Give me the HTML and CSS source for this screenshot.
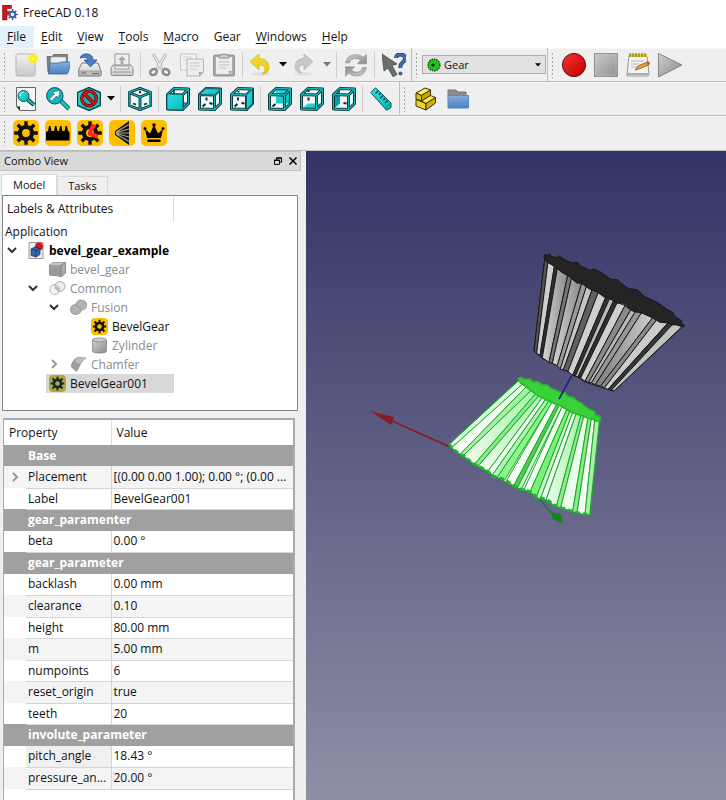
FILE: index.html
```html
<!DOCTYPE html>
<html lang="en">
<head>
<meta charset="utf-8">
<title>FreeCAD 0.18</title>
<link rel="stylesheet" href="styles.css">
</head>
<body>
<svg class="sprite" aria-hidden="true">
  <defs>
    <linearGradient id="grey" x1="0" y1="0" x2="1" y2="1"><stop offset="0" stop-color="#cfcfcf"/><stop offset="1" stop-color="#8c8c8c"/></linearGradient>
    <linearGradient id="pale" x1="0" y1="0" x2="0" y2="1"><stop offset="0" stop-color="#f2f2f2"/><stop offset="1" stop-color="#c9c9c9"/></linearGradient>
    <linearGradient id="blue" x1="0" y1="0" x2="0" y2="1"><stop offset="0" stop-color="#87aede"/><stop offset="1" stop-color="#4a7fc4"/></linearGradient>
    <linearGradient id="yellow" x1="0" y1="0" x2="0" y2="1"><stop offset="0" stop-color="#f6e04a"/><stop offset="1" stop-color="#e8c400"/></linearGradient>
    <linearGradient id="red" x1="0" y1="0" x2="1" y2="1"><stop offset="0" stop-color="#f03434"/><stop offset="1" stop-color="#c40000"/></linearGradient>
    <linearGradient id="cyan" x1="0" y1="0" x2="1" y2="1"><stop offset="0" stop-color="#34e0e2"/><stop offset="1" stop-color="#06b9bd"/></linearGradient>
    <radialGradient id="glow"><stop offset="0" stop-color="#fffde0"/><stop offset=".35" stop-color="#fff200"/><stop offset=".7" stop-color="#fff200" stop-opacity=".7"/><stop offset="1" stop-color="#fff200" stop-opacity="0"/></radialGradient>
  </defs>
  <symbol id="gear" viewBox="0 0 24 24"><circle cx="12" cy="12" r="6" fill="none" stroke="currentColor" stroke-width="4.200"/><path d="M12 .2V6M12 18v5.800M.2 12H6M18 12h5.800M3.700 3.700l4 4M16.300 16.300l4 4M20.300 3.700l-4 4M7.700 16.300l-4 4" stroke="currentColor" stroke-width="3.400" fill="none"/></symbol>
  <symbol id="cube-front-edges" viewBox="0 0 24 24"><path d="M1.500 7.500L16.500 8V22.500L1.500 22ZM1.500 7.500L8 1.500 22.500 2 16.500 8M22.500 2V16.500L16.500 22.500" fill="none" stroke="#06292c" stroke-width="3" stroke-linejoin="round"/><path d="M1.500 7.500L16.500 8V22.500L1.500 22ZM1.500 7.500L8 1.500 22.500 2 16.500 8M22.500 2V16.500L16.500 22.500" fill="none" stroke="#19b5ba" stroke-width="1.300" stroke-linejoin="round"/></symbol>
  <symbol id="cube-back-edges" viewBox="0 0 24 24"><path d="M1.500 22L8 16.500 22.500 16.500M8 16.500V1.500" fill="none" stroke="#0b4448" stroke-width="2"/><path d="M1.500 22L8 16.500 22.500 16.500M8 16.500V1.500" fill="none" stroke="#19a5aa" stroke-width=".8"/></symbol>
  <symbol id="cube-room" viewBox="0 0 24 24"><path d="M1.500 7.500L8 1.500 22.500 2V16.500L16.500 22.500 1.500 22z" fill="#f2f6f6"/></symbol>
  <symbol id="folder" viewBox="0 0 24 24"><path d="M2 3h8l2 2h8v5H2z" fill="#8b8b8b" stroke="#777"/><path d="M2 8.500h20.500v12.500H2z" fill="url(#blue)" stroke="#5d8ac4"/></symbol>
</svg>

<header class="titlebar">
  <svg class="logo" viewBox="0 0 16 16"><path d="M.5 0h9v3.500H5v3h3v3.500H5v5H.5z" fill="#cb161d" stroke="#8d0c11" stroke-width=".6"/><svg x="5" y="4" width="11" height="11" color="#3d65a6"><use href="#gear"/></svg></svg>
  <span>FreeCAD 0.18</span>
</header>

<nav class="menubar">
  <a href="#" class="active"><u>F</u>ile</a><a href="#"><u>E</u>dit</a><a href="#"><u>V</u>iew</a><a href="#"><u>T</u>ools</a><a href="#"><u>M</u>acro</a><a href="#">Gear</a><a href="#"><u>W</u>indows</a><a href="#"><u>H</u>elp</a>
</nav>

<div class="toolrow">
  <div class="toolbar">
    <i class="grip"></i>
    <button aria-label="New"><svg viewBox="0 0 24 24"><rect x="2" y="1" width="19" height="22" rx="1.500" fill="url(#pale)" stroke="#b4b4b4"/><circle cx="19" cy="5.500" r="5.800" fill="url(#glow)"/></svg></button>
    <button aria-label="Open"><svg viewBox="0 0 24 24"><path d="M2 19L1 3.500h5l1.500-2h14L21 19z" fill="#808080" stroke="#666" stroke-width=".8"/><path d="M5 4h15v10H4z" fill="#eee" stroke="#999" stroke-width=".6"/><path d="M4 10h9l2-1h10l-3 11q-.5 1-2 1H2.500z" fill="url(#blue)" stroke="#3465a4" stroke-width=".8"/></svg></button>
    <button aria-label="Save"><svg viewBox="0 0 24 24"><path d="M4 10h16l3 8v4q0 1-1 1H1q-1 0-1-1v-4z" fill="url(#pale)" stroke="#777"/><path d="M1 18h22v4.500H1z" fill="#bbb" stroke="#888" stroke-width=".6"/><path d="M14 20.500h7M3 20h5" stroke="#666"/><path d="M2 5Q4 0 10 1q5 1 5 6h4l-6.500 7L6 7h4Q9 3 2 5z" fill="#4a7fc0" stroke="#204a87" stroke-width=".7"/></svg></button>
    <button aria-label="Print"><svg viewBox="0 0 24 24"><path d="M5 1h14v12H5z" fill="#eee" stroke="#999"/><path d="M12 3l4 4h-2.500v4h-3V7H8z" fill="#aaa"/><path d="M3 12h18l2 3v6q0 1.500-1.500 1.500h-19Q1 22.500 1 21v-6z" fill="url(#pale)" stroke="#888"/><path d="M5 13h14v3H5zM3 19h18" fill="#f4f4f4" stroke="#999"/></svg></button>
    <i class="sep"></i>
    <button aria-label="Cut"><svg viewBox="0 0 24 24"><path d="M5 1l9 15M18 1L9 16" stroke="#aaa" stroke-width="3"/><path d="M5 1l9 15M18 1L9 16" stroke="#e6e6e6" stroke-width="1.500"/><g fill="none" stroke="#8d8d8d" stroke-width="2.500"><ellipse cx="5.500" cy="19" rx="3.500" ry="2.800" transform="rotate(-30 5.500 19)"/><ellipse cx="18" cy="19" rx="3.500" ry="2.800" transform="rotate(30 18 19)"/></g></svg></button>
    <button aria-label="Copy"><svg viewBox="0 0 24 24"><path d="M.5 1h16v16H.5z" fill="#f1f1f1" stroke="#c7c7c7"/><path d="M3 4h9M3 7h4" stroke="#d3d3d3"/><path d="M7 6h16.500v13L20 23H7z" fill="#ededed" stroke="#b5b5b5"/><path d="M10 10h10M10 13h10M10 16h7" stroke="#c9c9c9"/><path d="M23 19h-4v4z" fill="#aaa"/></svg></button>
    <button aria-label="Paste"><svg viewBox="0 0 24 24"><rect x="1.500" y="2" width="21" height="21" rx="1.500" fill="#aaa" stroke="#909090"/><path d="M4 4h16v15l-2 2H4z" fill="#ececec"/><path d="M7 9h10M7 12h10M7 15h7" stroke="#c4c4c4"/><path d="M7 5V2h3q2-2.500 4 0h3v3z" fill="#ccc" stroke="#8c8c8c"/><path d="M20 18h-3v3z" fill="#999"/></svg></button>
    <i class="sep"></i>
    <button class="split" aria-label="Undo"><svg viewBox="0 0 24 24"><ellipse cx="12" cy="21" rx="10" ry="2" fill="#e0e0e0"/><path d="M1 8.500L10 1v4.500q10 0 10 9.500-1 6-7 6 3-2 3-5 0-4-6-4v5z" fill="url(#yellow)" stroke="#d6bd16" stroke-width=".8"/></svg></button><button class="drop" aria-label="Undo list"><svg viewBox="0 0 8 5"><path d="M0 0h8L4 4.500z"/></svg></button>
    <button class="split" aria-label="Redo"><svg viewBox="0 0 24 24"><ellipse cx="10" cy="21" rx="9" ry="2" fill="#e2e2e2"/><path d="M20 8.500L11 1v4.500Q2 5.500 2 14q1 6 7 6-3-2-3-5 0-3 5-3v5z" fill="#c8c8c8" stroke="#b9b9b9" stroke-width=".8"/></svg></button><button class="drop dim" aria-label="Redo list"><svg viewBox="0 0 8 5"><path d="M0 0h8L4 4.500z"/></svg></button>
    <i class="sep"></i>
    <button aria-label="Refresh"><svg viewBox="0 0 24 24"><g fill="url(#grey)" stroke="#8b8b8b" stroke-width=".6"><path id="spin" d="M1.500 10Q3 1.500 12 1.500q4 0 7.200 2.800L22.500 1.500v9.300h-9l3-3.300Q14.500 5.500 12 5.500 6.500 5.500 5.500 10z"/><use href="#spin" transform="rotate(180 12 12.300)"/></g></svg></button>
    <i class="sep"></i>
    <button aria-label="What's This?"><svg viewBox="0 0 24 24"><path d="M0 1l15 10-5 1.500 5 9-4 2.300L6 15l-4 3z" fill="#6c706a" stroke="#3b3d3a" stroke-width=".7"/><path d="M14 5q0-3.500 4-3.500 5 0 5 4 0 2-2.500 4T18.500 15" fill="none" stroke="#183c6e" stroke-width="3.800"/><path d="M14 5q0-3.500 4-3.500 5 0 5 4 0 2-2.500 4T18.500 15" fill="none" stroke="#3d73b5" stroke-width="2.200"/><circle cx="18.500" cy="20.500" r="2" fill="#3465a4"/></svg></button>
  </div>
  <div class="toolbar bounded">
    <i class="grip"></i>
    <div class="combo"><svg class="combo-icon" viewBox="0 0 14 14"><circle cx="7" cy="7" r="5.800" fill="#1fd21f" stroke="#174b17" stroke-width="1.600" stroke-dasharray="1.600 .8"/><circle cx="6.500" cy="7" r="3.800" fill="#18c818"/><circle cx="6" cy="7" r="1.600" fill="#052d05"/></svg><select aria-label="Workbench"><option>Gear</option></select><svg class="combo-arrow" viewBox="0 0 8 5"><path d="M0 0h8L4 4.500z"/></svg></div>
  </div>
  <div class="toolbar bounded">
    <i class="grip"></i>
    <button aria-label="Record macro"><svg viewBox="0 0 24 24"><circle cx="12" cy="12" r="11.600" fill="url(#red)" stroke="#4d0808" stroke-width=".9"/></svg></button>
    <button aria-label="Stop macro"><svg viewBox="0 0 24 24"><path d="M.5.5h23.500v23.500H.5z" fill="url(#grey)" stroke="#8f8f8f"/><path d="M2 2h20v20H2z" fill="none" stroke="#c4c4c4" stroke-width=".6"/></svg></button>
    <button aria-label="Macros"><svg viewBox="0 0 24 24"><path d="M3 3h18l2 18q0 2-2 2H2q-2 0-1-2z" fill="#f3f3f3" stroke="#999"/><path d="M3 1h18v3H3z" fill="#d7c93f"/><path d="M4 0v4M7 0v4M10 0v4M13 0v4M16 0v4M19 0v4" stroke="#75701e"/><path d="M5 8h13M5 11h8M5 14h7" stroke="#bbb"/><path d="M1 21h21" stroke="#999" stroke-width="1.500"/><path d="M9 17l3-4 9-4 1.500 3L13 16z" fill="#e0a436" stroke="#80500a" stroke-width=".7"/><path d="M21 9l2-.5 1 2.500-1.500 1z" fill="#e33"/></svg></button>
    <button aria-label="Run macro"><svg viewBox="0 0 24 24"><path d="M.5.5L24 12 .5 24z" fill="url(#grey)" stroke="#858585"/></svg></button>
  </div>
</div>

<div class="toolrow">
  <div class="toolbar">
    <i class="grip"></i>
    <button aria-label="Fit all"><svg viewBox="0 0 24 24"><path d="M2.500.5h19v23H6l-3.500-4z" fill="#f5f5f5" stroke="#666"/><path d="M2.500 19.500H6v4z" fill="#222"/><path d="M13 12l7 6" stroke="#06292c" stroke-width="4"/><path d="M13 12l7 6" stroke="#16c3c8" stroke-width="2.200"/><circle cx="9.500" cy="9" r="5.500" fill="url(#cyan)" stroke="#0b5b5f"/><path d="M6 9q0-3.500 3.500-3.500" fill="none" stroke="#aef6f6" stroke-width="1.200"/></svg></button>
    <button aria-label="Fit selection"><svg viewBox="0 0 24 24"><path d="M14 13l9 9" stroke="#06595c" stroke-width="4.500"/><path d="M14 13l9 9" stroke="#16c9cd" stroke-width="2.600"/><circle cx="8.800" cy="8.800" r="8.200" fill="#16b5ba" stroke="#075055"/><path d="M14 3.500L12.500 11l-2-2L5.500 14 3.500 12l5-5-2-2z" fill="#fff" stroke="#24595c" stroke-width=".6"/></svg></button>
    <button class="split" aria-label="Draw style"><svg viewBox="0 0 24 24"><path d="M12 .5l11.500 5v13L12 23.500.5 18.500v-13z" fill="url(#cyan)" stroke="#0a4145" stroke-width="1.400"/><circle cx="12" cy="11.500" r="7.300" fill="#29a3a5" stroke="#3b0606" stroke-width="3.200"/><path d="M7 6.500l10 10" stroke="#3b0606" stroke-width="3.200"/><circle cx="12" cy="11.500" r="7.300" fill="none" stroke="#d5141b" stroke-width="2"/><path d="M7 6.500l10 10" stroke="#d5141b" stroke-width="2"/></svg></button><button class="drop" aria-label="Draw style list"><svg viewBox="0 0 8 5"><path d="M0 0h8L4 4.500z"/></svg></button>
    <i class="sep"></i>
    <button aria-label="Isometric"><svg viewBox="0 0 24 24"><path d="M12 1.300l10.800 4.200v13L12 22.700 1.200 18.500v-13zM1.200 5.500L12 10l10.800-4.500M12 10v12.500" fill="#eaf5f5" stroke="#06292c" stroke-width="2.800" stroke-linejoin="round"/><path d="M12 1.300l10.800 4.200v13L12 22.700 1.200 18.500v-13zM1.200 5.500L12 10l10.800-4.500M12 10v12.500" fill="none" stroke="#19b5ba" stroke-width="1.200"/><path d="M12 3.800v2.500M5 16.500l3 1M19 16.500l-3 1" stroke="#123" stroke-width="1.800" fill="none"/></svg></button>
    <i class="sep"></i>
    <button aria-label="Front"><svg viewBox="0 0 24 24"><use href="#cube-room"/><use href="#cube-back-edges"/><use href="#cube-front-edges"/><path d="M1 7L17 7.500V23L1 22.500z" fill="url(#cyan)" stroke="#0b5b5f" stroke-width=".8"/></svg></button>
    <button aria-label="Top"><svg viewBox="0 0 24 24"><use href="#cube-room"/><use href="#cube-front-edges"/><path d="M1.500 7.500L8 1.500 22.500 2 16.500 8z" fill="url(#cyan)" stroke="#0b4448" stroke-width=".8"/><path d="M8.500 10.500v3M4.500 19.500l3-2.500M11.500 16l3 1M19.500 9v0" stroke="#123" stroke-width="1.900"/></svg></button>
    <button aria-label="Right"><svg viewBox="0 0 24 24"><use href="#cube-room"/><use href="#cube-front-edges"/><path d="M16.500 8L22.500 2V16.500L16.500 22.500z" fill="url(#cyan)" stroke="#0b4448" stroke-width=".8"/><path d="M8.500 4v1.500M8 10.500v3M4.500 19.500l3-2.500M11.500 16l3 .5" stroke="#123" stroke-width="1.900"/></svg></button>
    <i class="sep"></i>
    <button aria-label="Rear"><svg viewBox="0 0 24 24"><use href="#cube-room"/><path d="M8 1.500L22.500 2V16.500H8z" fill="url(#cyan)"/><path d="M4.500 19.500l3-2.500" stroke="#123" stroke-width="2"/><use href="#cube-front-edges"/></svg></button>
    <button aria-label="Bottom"><svg viewBox="0 0 24 24"><use href="#cube-room"/><path d="M1.500 22l6.500-5.500h14.500L16.500 22.500z" fill="url(#cyan)"/><path d="M8.500 3v2M8.500 10.500v3" stroke="#123" stroke-width="2"/><use href="#cube-front-edges"/></svg></button>
    <button aria-label="Left"><svg viewBox="0 0 24 24"><use href="#cube-room"/><path d="M1.500 7.500L8 1.500v15L1.500 22z" fill="#0a9ca0"/><path d="M11.500 16l3 .5" stroke="#123" stroke-width="2"/><use href="#cube-front-edges"/></svg></button>
    <i class="sep"></i>
    <button aria-label="Measure"><svg viewBox="0 0 24 24"><path d="M5.500.8L.8 5.500 15 21.500l1.500 1.800L21 20.500V16z" fill="url(#cyan)" stroke="#0a5054"/><path d="M15 21.500L20.500 16" stroke="#0a5054" stroke-width=".7"/><path d="M8 4L5.500 6.500M10.300 6.300L9 7.800M12.600 8.700L10 11.300M15 11.200l-1.500 1.500M17.500 13.700L15 16" stroke="#06393c" stroke-width="1.300"/></svg></button>
  </div>
  <div class="toolbar bounded">
    <i class="grip"></i>
    <button aria-label="Create part"><svg viewBox="0 0 24 24"><g stroke="#3b3200" stroke-width="1" stroke-linejoin="round"><path d="M2 6L11 1l5.500 2L7.500 8.500z" fill="#fcea5e"/><path d="M2 6L7.500 8.500V14L2 12z" fill="#e0c112"/><path d="M7.500 8.500l9-5.500v5.500L7.500 14z" fill="#c9a900"/><path d="M2 12.500l10 4V23L2 19z" fill="#edd22a"/><path d="M7.500 14L16.500 8.500l5 2-9.500 6z" fill="#fcea5e"/><path d="M12 16.500l9.500-6V16L12 23z" fill="#cdb00c"/></g></svg></button>
    <button aria-label="Create group"><svg viewBox="0 0 24 24"><use href="#folder"/></svg></button>
  </div>
</div>

<div class="toolrow last">
  <div class="toolbar">
    <i class="grip"></i>
    <button aria-label="Involute gear"><svg class="badge" viewBox="0 0 26 26"><svg x="1" y="1" width="24" height="24"><use href="#gear"/></svg></svg></button>
    <button aria-label="Involute rack"><svg class="badge" viewBox="0 0 26 26"><path d="M1 20.500V12l2-1 1-5h1.500l1 5h2.500l1-5h1.500l1 5h1.500l1-5h1.500l1 5h2l1-5h1.500l1 5 1.500 1v8.500z"/></svg></button>
    <button aria-label="Cycloid gear"><svg class="badge" viewBox="0 0 26 26"><svg x="1" y="1" width="24" height="24"><use href="#gear"/></svg><path d="M15 3.500l4.500 1.800-4.500 7 6 2-1 4.200-9-3.200V12z" fill="#ff2a10"/></svg></button>
    <button aria-label="Bevel gear"><svg class="badge" viewBox="0 0 26 26"><path d="M20 1v24L6 15v-4z" fill="#111"/><path d="M7 12L20 4.500M7 12.500L20 9M7 13h13M7 13.500L20 17M7 14l13 7.500" stroke="#a8a391" stroke-width="1.100"/></svg></button>
    <button aria-label="Crown gear"><svg class="badge" viewBox="0 0 26 26"><path d="M6 18L4 9l5 4.500L13 5l4 8.500L22 9l-2 9zM6.500 19.500h13V22h-13z"/><circle cx="4" cy="8.500" r="1.500"/><circle cx="13" cy="5" r="1.800"/><circle cx="22" cy="8.500" r="1.500"/></svg></button>
  </div>
</div>

<main class="workspace">
  <aside class="dock">
    <div class="dock-title"><span>Combo View</span>
      <button aria-label="Float"><svg viewBox="0 0 8 8"><path d="M2.500 2.500V.8h5v4.400H6M.5 3h5v4.400h-5zM.5 3.400h5M2.500 1.200h5" fill="none" stroke="#000"/></svg></button>
      <button aria-label="Close"><svg viewBox="0 0 8 8"><path d="M.5.5l7 7M7.500.5l-7 7" stroke="#000" stroke-width="1.500"/></svg></button>
    </div>
    <div class="tabs" role="tablist"><button class="tab current" role="tab" aria-selected="true">Model</button><button class="tab" role="tab" aria-selected="false">Tasks</button></div>
    <section class="tree">
      <div class="tree-head"><span>Labels &amp; Attributes</span></div>
      <div class="tree-root">Application</div>
      <ul>
        <li><div class="node strong"><svg class="tw" viewBox="0 0 18 18"><path d="M5 7l4 4 4-4"/></svg><span class="item"><svg class="ico" viewBox="0 0 17 17"><path d="M1 .5h14v16H1z" fill="#eee" stroke="#999"/><circle cx="11" cy="4.500" r="4" fill="#d8141b"/><path d="M3 7l4-2 5 1.500v6L8 15l-5-1.500z" fill="#3566ad" stroke="#16305d" stroke-width=".7"/><path d="M3 7l5 1.500 4-2M8 8.500V15" fill="none" stroke="#16305d" stroke-width=".7"/></svg>bevel_gear_example</span></div>
          <ul>
            <li><div class="node off"><i class="tw"></i><span class="item"><svg class="ico" viewBox="0 0 17 17"><path d="M.5 4L4 1.500h12.500V12L13 15.500.5 14z" fill="#aaa" stroke="#777" stroke-width=".8"/><path d="M.5 4H12v11L.5 14z" fill="#9b9b9b"/><path d="M.5 4L4 1.500h12.500L12 4z" fill="#c6c6c6"/><path d="M12 4l4.500-2.500M12 4v11.500" stroke="#777" stroke-width=".7"/></svg>bevel_gear</span></div></li>
            <li><div class="node off"><svg class="tw" viewBox="0 0 18 18"><path d="M5 7l4 4 4-4"/></svg><span class="item"><svg class="ico" viewBox="0 0 17 17"><circle cx="5.800" cy="9.500" r="5" fill="#eee" fill-opacity=".6" stroke="#b5b5b5"/><circle cx="11" cy="6.500" r="5" fill="#ddd" fill-opacity=".5" stroke="#aaa"/><path d="M6 6.500q4-1 5 4-4 1-5-4z" fill="#bbb"/></svg>Common</span></div>
              <ul>
                <li><div class="node off"><svg class="tw" viewBox="0 0 18 18"><path d="M5 7l4 4 4-4"/></svg><span class="item"><svg class="ico" viewBox="0 0 17 17"><path d="M5.500 5.500Q7 1 11.500 1q5 .5 5 5 0 4.500-5 5-1.500 4.500-6 4.500-5-.5-5-5 0-4.500 5-5z" fill="#b3b3b3" stroke="#8b8b8b" stroke-width=".8"/><path d="M6 6q4 1 5 5" stroke="#8b8b8b" stroke-width=".8" fill="none"/></svg>Fusion</span></div>
                  <ul>
                    <li><div class="node"><i class="tw"></i><span class="item"><svg class="ico badge" viewBox="0 0 26 26"><svg x="2" y="2" width="22" height="22"><use href="#gear"/></svg></svg>BevelGear</span></div></li>
                    <li><div class="node off"><i class="tw"></i><span class="item"><svg class="ico" viewBox="0 0 17 17"><path d="M1.500 3v11q0 2 7 2t7-2V3z" fill="url(#grey)" stroke="#858585" stroke-width=".8"/><ellipse cx="8.500" cy="3" rx="7" ry="2" fill="#c9c9c9" stroke="#858585" stroke-width=".8"/></svg>Zylinder</span></div></li>
                  </ul></li>
                <li><div class="node off"><svg class="tw pale" viewBox="0 0 18 18"><path d="M7 5l4 4-4 4"/></svg><span class="item"><svg class="ico" viewBox="0 0 17 17"><path d="M1 10.500Q3 3 8 1.500L16 2q-4 2-5.500 6L6.500 15.500z" fill="#9f9f9f" stroke="#888" stroke-width=".8"/><path d="M8 1.500L16 2q-4 2-5.500 6L4.500 5.500" fill="#bdbdbd"/></svg>Chamfer</span></div></li>
              </ul></li>
            <li><div class="node selected"><i class="tw"></i><span class="item"><svg class="ico badge" viewBox="0 0 26 26"><svg x="2" y="2" width="22" height="22"><use href="#gear"/></svg></svg>BevelGear001</span></div></li>
          </ul></li>
      </ul>
    </section>
    <section class="props">
      <table>
        <colgroup><col class="c-gutter"><col class="c-name"><col></colgroup>
        <thead><tr><th colspan="2">Property</th><th>Value</th></tr></thead>
        <tbody>
          <tr class="group"><td></td><th colspan="2">Base</th></tr>
          <tr class="alt"><td><svg class="more" viewBox="0 0 18 18"><path d="M7 5l4 4-4 4"/></svg></td><td>Placement</td><td>[(0.00 0.00 1.00); 0.00 °; (0.00 ...</td></tr>
          <tr><td></td><td>Label</td><td>BevelGear001</td></tr>
          <tr class="group"><td></td><th colspan="2">gear_paramenter</th></tr>
          <tr><td></td><td>beta</td><td>0.00 °</td></tr>
          <tr class="group"><td></td><th colspan="2">gear_parameter</th></tr>
          <tr><td></td><td>backlash</td><td>0.00 mm</td></tr>
          <tr class="alt"><td></td><td>clearance</td><td>0.10</td></tr>
          <tr><td></td><td>height</td><td>80.00 mm</td></tr>
          <tr class="alt"><td></td><td>m</td><td>5.00 mm</td></tr>
          <tr><td></td><td>numpoints</td><td>6</td></tr>
          <tr class="alt"><td></td><td>reset_origin</td><td>true</td></tr>
          <tr><td></td><td>teeth</td><td>20</td></tr>
          <tr class="group"><td></td><th colspan="2">involute_parameter</th></tr>
          <tr><td></td><td class="focus">pitch_angle</td><td>18.43 °</td></tr>
          <tr class="alt"><td></td><td>pressure_an...</td><td>20.00 °</td></tr>
        </tbody>
      </table>
    </section>
  </aside>

  <section class="viewport" aria-label="3D view">
    <svg viewBox="306 151 420 649">
      <defs>
        <linearGradient id="shade"><stop offset="0" stop-color="#7b7b7b"/><stop offset="1" stop-color="#cfcfcf"/></linearGradient>
        <linearGradient id="shade2"><stop offset="0" stop-color="#d4d4d4"/><stop offset="1" stop-color="#8a8a8a"/></linearGradient>
        <linearGradient id="gshade"><stop offset="0" stop-color="#effcef"/><stop offset="1" stop-color="#a6f3a6"/></linearGradient>
      </defs>
      <g transform="translate(500 235) scale(.33333)" stroke="#181818" stroke-width="3" stroke-linejoin="round">
        <path d="M135 65L102 348l24 22 46 22 33 18 53 32 42 14 42 12L550 273z" fill="#c2c2c2"/>
        <path d="M135 65L102 348l8 6L144 80z" fill="#555"/>
        <path d="M144 80L110 354l10 8L163 95z" fill="#cdcdcd"/>
        <path d="M163 95L120 362l7 6L172 100z" fill="#303030"/>
        <path d="M172 100L127 368l20 14L203 122z" fill="url(#shade2)"/>
        <path d="M203 122L147 382l10 3L215 128z" fill="#777"/>
        <path d="M215 128L157 385l15 7L245 145z" fill="url(#shade2)"/>
        <path d="M245 145L172 392l9 10L260 152z" fill="#999"/>
        <path d="M260 152L181 402l9 3L276 165z" fill="#c5c5c5"/>
        <path d="M276 165L190 405l14 4L295 172z" fill="#606060"/>
        <path d="M295 172L204 409l14 12L318 185z" fill="#cfcfcf"/>
        <path d="M318 185L218 421l8 3L328 192z" fill="#333"/>
        <path d="M328 192L226 424l8 2L341 197z" fill="#bbb"/>
        <path d="M341 197L234 426l8 3L352 202z" fill="#303030"/>
        <path d="M352 202L242 429l13 10L375 212z" fill="#cfcfcf"/>
        <path d="M375 212L255 439l11 3L392 225z" fill="#888"/>
        <path d="M392 225L266 442l8 2L406 230z" fill="#b7b7b7"/>
        <path d="M406 230L274 444l12 5L424 234z" fill="#969696"/>
        <path d="M424 234L286 449l16 4L458 248z" fill="url(#shade)"/>
        <path d="M458 248L302 453l11 6L472 252z" fill="#888"/>
        <path d="M472 252L313 459l11 4L503 265z" fill="#ccc"/>
        <path d="M503 265L324 463l9 4L518 268z" fill="#363636"/>
        <path d="M518 268L333 467l10 0L548 273z" fill="#c3c3c3"/>
        <path d="M135 58L142 62 148 56 154 64 170 68 178 62 186 70 215 84 232 82 240 92 270 106 282 102 300 110 332 132 352 134 365 146 385 160 412 164 426 178 440 188 468 200 478 206 500 222 520 234 524 244 546 258 542 264 555 272 545 276 530 268 518 270 505 264 480 262 460 250 430 234 400 229 370 205 350 204 330 190 312 186 290 170 268 162 245 145 230 144 205 122 185 112 165 94 142 82 132 66z" fill="#242424"/>
      </g>
      <path d="M540 500l15 17" stroke="#167a28" stroke-width="1.500"/>
      <path d="M552 513l9 2 1 8-9-4z" fill="#178222" stroke="#178222"/>
      <path d="M450 447l-60-27" stroke="#861d24" stroke-width="1.700"/>
      <path d="M370 411l24 6-3 8z" fill="#861d24"/>
      <g transform="translate(360 365) scale(.33333)" stroke="#17a829" stroke-width="3" stroke-linejoin="round">
        <path d="M478 45L268 238l32 30 50 34 50 28 60 34 45 16 45 20 50 26 50 18 40 6L718 165z" fill="#e4fae4"/>
        <path d="M478 45L268 238l7 10L488 57z" fill="#d7ffd7"/>
        <path d="M488 57L275 248l25 20L498 66z" fill="#f4fff4"/>
        <path d="M498 66L300 268l10 4L514 76z" fill="#a5efa5"/>
        <path d="M514 76L310 272l33 26L526 87z" fill="url(#gshade)"/>
        <path d="M526 87L343 298l12 5L537 92z" fill="#88e988"/>
        <path d="M537 92L355 303l29 16L547 98z" fill="url(#gshade)"/>
        <path d="M547 98L384 319l14 10L556 104z" fill="#f4fff4"/>
        <path d="M556 104L398 329l13 9L566 109z" fill="#b2f4b2"/>
        <path d="M566 109L411 338l22 8L576 112z" fill="#8df58d"/>
        <path d="M576 112L440 346l21 17L590 118z" fill="#f4fff4"/>
        <path d="M590 118L461 363l11 7L598 121z" fill="#54c954"/>
        <path d="M598 121L472 370l12 2L606 126z" fill="#d7ffd7"/>
        <path d="M606 126L492 374l18 7L620 134z" fill="#f4fff4"/>
        <path d="M620 134L510 381l19 15L629 140z" fill="#79f179"/>
        <path d="M629 140L529 396l12 6L638 143z" fill="#c9f8c9"/>
        <path d="M638 143L541 402l17 3L648 147z" fill="#f4fff4"/>
        <path d="M648 147L558 405l31 20L663 151z" fill="url(#gshade)"/>
        <path d="M663 151L589 425l13 3L671 155z" fill="#92e992"/>
        <path d="M671 155L602 428l36 12L684 159z" fill="#eaffea"/>
        <path d="M684 159L638 440l13 4L694 162z" fill="#8aeb8a"/>
        <path d="M694 162L651 444l24 5L704 165z" fill="#f4fff4"/>
        <path d="M704 165L675 449l14 1L718 168z" fill="#a9efa9"/>
        <path d="M268 238l7 10 25 20 10 4 33 26 12 5 29 16 14 14 35 10 28 20 23 10 26 7 19 15 30 8 31 21 50 16 35 8h14" fill="none" stroke="#19b72a" stroke-width="9" stroke-dasharray="14 9"/>
        <path d="M474 40L484 38 494 44 508 42 520 52 534 50 546 60 562 60 572 70 588 76 600 82 614 84 624 94 640 98 650 108 664 114 674 124 686 132 704 140 706 152 720 154 720 168 708 168 698 160 684 160 668 152 648 147 630 138 606 124 585 116 560 105 535 92 515 78 495 62 482 54z" fill="#3bd13b" stroke="#27bd2f" stroke-width="5"/>
      </g>
      <path d="M571.500 376L559 399" stroke="#20207c" stroke-width="1.600"/>
    </svg>
  </section>
</main>
</body>
</html>
```
FILE: styles.css
```css
* { box-sizing: border-box; }

body {
  margin: 0;
  min-height: 100vh;
  display: flex;
  flex-direction: column;
  background: #efefef;
  color: #111;
  font: 12px/18px "Open Sans", "Noto Sans", sans-serif;
}

button {
  border: 0;
  padding: 0;
  background: none;
  font: inherit;
  color: inherit;
}

svg { display: block; }
.sprite { position: absolute; width: 0; height: 0; }

/* Title and menu */
.titlebar {
  display: flex;
  align-items: center;
  gap: 5px;
  height: 26px;
  padding-left: 2px;
  background: #fff;
}
.logo { width: 16px; height: 16px; }

.menubar { display: flex; height: 22px; background: #fff; }
.menubar a {
  padding: 0 8px 0 7px;
  line-height: 22px;
  color: #111;
  text-decoration: none;
}
.menubar u { text-underline-offset: 2px; }
.menubar .active { background: #e3f1fc; }

/* Toolbars */
.toolrow {
  display: flex;
  height: 34px;
  border-bottom: 1px solid #bdbdbd;
  box-shadow: inset 0 1px #f8f8f8;
}
.toolrow.last { height: 35px; }
.toolbar { display: flex; align-items: center; }
.toolbar.bounded { margin-left: 2px; box-shadow: -1px 0 #bdbdbd; }
.grip {
  width: 3px;
  height: 26px;
  margin: 0 4px 0 3px;
  background: radial-gradient(circle, #a8a8a8 1px, transparent 1px) 0 0 / 3px 4px;
}
.sep { width: 1px; height: 26px; margin: 0 3px 0 2px; background: #cfcfcf; }
.toolbar button {
  display: flex;
  align-items: center;
  justify-content: center;
  width: 32px;
  height: 32px;
}
.toolbar button svg { width: 24px; height: 24px; }
.toolbar .split { width: 30px; }
.toolbar .drop { width: 14px; }
.toolbar .drop svg { width: 8px; height: 5px; }
.drop.dim { fill: #777; }
.badge { background: #ffbf00; border-radius: 4px; }
.toolbar button .badge { width: 26px; height: 26px; border-radius: 5px; }

.combo {
  display: flex;
  align-items: center;
  gap: 3px;
  width: 124px;
  height: 19px;
  padding: 0 4px;
  border: 1px solid #adadad;
  background: #e1e1e1;
}
.combo select {
  flex: 1;
  min-width: 0;
  border: 0;
  padding: 0;
  appearance: none;
  background: none;
  color: #111;
  font: 11px/16px "Open Sans", sans-serif;
}
.combo-icon { width: 14px; height: 14px; }
.combo-arrow { width: 6px; height: 4px; }

/* Workspace */
.workspace { flex: 1; display: flex; }
.dock {
  display: flex;
  flex-direction: column;
  flex: 0 0 306px;
}
.dock-title {
  display: flex;
  align-items: center;
  gap: 7px;
  height: 20px;
  margin-right: 5px;
  padding: 0 3px 0 4px;
  border: 1px solid #c3c3c3;
  border-left: 0;
  background: #dadada;
  font-size: 11px;
}
.dock-title span { flex: 1; }
.dock-title svg { width: 8px; height: 8px; }

.tabs { display: flex; align-items: flex-end; height: 24px; padding-left: 1px; font-size: 11px; }
.tab {
  height: 19px;
  line-height: 16px;
  padding: 0 10px;
  border: 1px solid #d9d9d9;
  border-bottom: 0;
}
.tab.current { height: 21px; padding: 0 11px; background: #fff; }

.tree {
  height: 216px;
  margin: 0 8px 0 2px;
  border: 1px solid #82858c;
  background: #fff;
}
.tree-head { height: 26px; padding-left: 4px; line-height: 26px; }
.tree-head span { display: block; width: 167px; border-right: 1px solid #dcdcdc; }
.tree-root { padding-left: 2px; line-height: 19px; }
.tree ul { margin: 0; padding: 0; list-style: none; }
.tree ul ul { padding-left: 21px; }
.node { display: flex; height: 19px; line-height: 19px; color: #111; }
.node.off { color: #8a8a8a; }
.node.strong { font-weight: 700; color: #000; }
.tw { width: 18px; height: 18px; fill: none; stroke: #333; stroke-width: 2; }
.tw.pale, .more { stroke: #999; }
.item { display: flex; align-items: center; gap: 4px; margin-left: 4px; padding-left: 3px; }
.ico { width: 17px; height: 17px; }
.selected .item { min-width: 128px; background: #d9d9d9; }
.selected .badge { background: #b0a83c; color: #12263f; }

.props {
  flex: 1;
  margin: 7px 11px 0 3px;
  border: 1px solid #a7a9b3;
  border-width: 2px 2px 0 1px;
  background: #fff;
}
table { width: 100%; border-collapse: collapse; table-layout: fixed; }
.c-gutter { width: 22px; }
.c-name { width: 85px; }
td, th { padding: 0 2px; text-align: left; font-weight: 400; white-space: nowrap; overflow: hidden; }
tbody tr { height: 21px; line-height: 20px; }
tbody tr:nth-child(even) { height: 22px; }
thead tr { height: 25px; }
thead th { padding: 0 5px; }
thead th:last-child { border-left: 1px solid #dcdcdc; }
tbody td + td { border-bottom: 1px solid #d5d5d5; }
tbody td + td + td { border-left: 1px solid #d5d5d5; }
.alt { background: #f4f4f4; }
.focus { background: #f0f0f0; }
.group { background: #a0a0a0; color: #fff; }
.group th { font-weight: 700; }
.more { width: 18px; height: 18px; fill: none; stroke-width: 2; }

.viewport {
  flex: 1;
  min-width: 0;
  background: linear-gradient(#333366, #8f8fa6);
}
.viewport svg { width: 100%; height: 100%; }
```
